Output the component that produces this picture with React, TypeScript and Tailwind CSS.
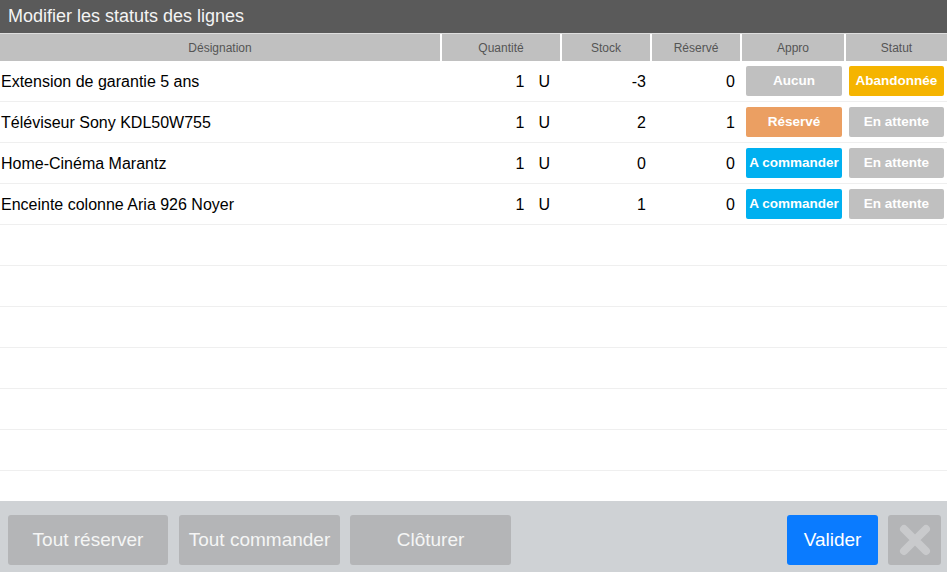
const cols = 'grid grid-cols-[440px_118px_88px_88px_102px_101px] gap-x-[2px]';

type Line = {
  name: string;
  qty: number;
  stock: number;
  reserved: number;
  appro: 'Aucun' | 'Réservé' | 'A commander';
  statut: 'Abandonnée' | 'En attente';
};

const lines: Line[] = [
  { name: 'Extension de garantie 5 ans', qty: 1, stock: -3, reserved: 0, appro: 'Aucun', statut: 'Abandonnée' },
  { name: 'Téléviseur Sony KDL50W755', qty: 1, stock: 2, reserved: 1, appro: 'Réservé', statut: 'En attente' },
  { name: 'Home-Cinéma Marantz', qty: 1, stock: 0, reserved: 0, appro: 'A commander', statut: 'En attente' },
  { name: 'Enceinte colonne Aria 926 Noyer', qty: 1, stock: 1, reserved: 0, appro: 'A commander', statut: 'En attente' },
];

const approColor = {
  Aucun: 'bg-[#c0c0c0]',
  'Réservé': 'bg-[#eb9f62]',
  'A commander': 'bg-[#00b0f0]',
};

const statutColor = {
  'Abandonnée': 'bg-[#f5b400]',
  'En attente': 'bg-[#c0c0c0]',
};

function Row({ line }: { line?: Line }) {
  return (
    <div className={`${cols} h-[41px] border-b border-[#efefef] text-[16px] text-black`}>
      {line ? (
        <>
          <div className="flex items-center pl-[1px] pt-[2px]">{line.name}</div>
          <div className="flex items-center justify-end gap-[14px] pr-[10px] pt-[2px]">
            <span>{line.qty}</span>
            <span>U</span>
          </div>
          <div className="flex items-center justify-end pr-[4px] pt-[2px]">{line.stock}</div>
          <div className="flex items-center justify-end pr-[5px] pt-[2px]">{line.reserved}</div>
          <div className="flex items-center pl-[4px]">
            <div className={`flex h-[30px] w-[96px] items-center justify-center rounded-[2px] text-[13.5px] font-bold text-white ${approColor[line.appro]}`}>
              {line.appro}
            </div>
          </div>
          <div className="flex items-center pl-[3px]">
            <div className={`flex h-[30px] w-[95px] items-center justify-center rounded-[2px] text-[13.5px] font-bold text-white ${statutColor[line.statut]}`}>
              {line.statut}
            </div>
          </div>
        </>
      ) : null}
    </div>
  );
}

export default function App() {
  const empty = Array.from({ length: 6 });

  return (
    <div className="flex h-[572px] w-[947px] flex-col bg-white font-['Liberation_Sans',Arial,sans-serif]">
      {/* Title */}
      <div className="flex h-[33px] items-center bg-[#5a5a5a] pl-[8px] text-[18px] text-[#f4f4f4]">
        Modifier les statuts des lignes
      </div>

      {/* Header */}
      <div className={`${cols} h-[28px] border-t border-[#dedede] bg-white text-[12px] text-[#555]`}>
        {['Désignation', 'Quantité', 'Stock', 'Réservé', 'Appro', 'Statut'].map((h) => (
          <div key={h} className="flex items-center justify-center bg-[#c0c0c0]">
            {h}
          </div>
        ))}
      </div>

      {/* Lines */}
      <div className="flex-1">
        {lines.map((l) => (
          <Row key={l.name} line={l} />
        ))}
        {empty.map((_, i) => (
          <Row key={i} />
        ))}
      </div>

      {/* Footer */}
      <div className="flex h-[71px] items-start bg-[#cfd2d5] pl-[8px] pr-[6px] pt-[14px] text-[19px] text-[#f5f5f5]">
        <div className="flex">
          <button className="h-[50px] w-[160px] rounded-[3px] bg-[#b4b5b7]">Tout réserver</button>
          <button className="ml-[11px] h-[50px] w-[161px] rounded-[3px] bg-[#b4b5b7]">Tout commander</button>
          <button className="ml-[10px] h-[50px] w-[161px] rounded-[3px] bg-[#b4b5b7]">Clôturer</button>
        </div>
        <div className="ml-auto flex gap-[10px]">
          <button className="h-[50px] w-[91px] rounded-[3px] bg-[#0a7bff] text-white">Valider</button>
          <button className="flex h-[50px] w-[53px] items-center justify-center rounded-[3px] bg-[#b4b5b7]">
            <svg width="34" height="34" viewBox="0 0 34 34">
              <path d="M6 6 L28 28 M28 6 L6 28" stroke="#c9cacc" strokeWidth="8" strokeLinecap="round" />
            </svg>
          </button>
        </div>
      </div>
    </div>
  );
}
